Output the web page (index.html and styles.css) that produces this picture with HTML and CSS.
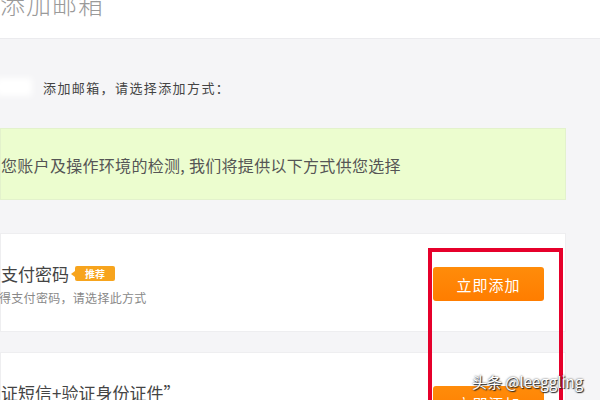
FILE: index.html
```html
<!DOCTYPE html>
<html lang="zh-CN">
<head>
<meta charset="utf-8">
<link rel="stylesheet" href="styles.css">
</head>
<body>
<header class="header">
  <h1 class="page-title">添加邮箱</h1>
</header>
<main class="main">
  <div class="intro">
    <span class="mask"></span>
    <span class="intro-text">添加邮箱，请选择添加方式：</span>
  </div>
  <div class="notice">您账户及操作环境的检测, 我们将提供以下方式供您选择</div>
  <div class="card">
    <div class="card-info">
      <div class="card-title">支付密码<span class="badge">推荐</span></div>
      <div class="card-sub">得支付密码，请选择此方式</div>
    </div>
    <button class="btn">立即添加</button>
  </div>
  <div class="card">
    <div class="card-info">
      <div class="card-title">证短信+验证身份证件”</div>
      <div class="card-sub">请选择此方式</div>
    </div>
    <button class="btn">立即添加</button>
  </div>
</main>
<div class="highlight"></div>
<div class="watermark">头条 @leeggling</div>
</body>
</html>
```
FILE: styles.css
```css
* { box-sizing: border-box; }
html, body {
  margin: 0;
  padding: 0;
  width: 600px;
  height: 400px;
  overflow: hidden;
}
body {
  background: #f5f5f7;
  font-family: "Noto Sans CJK SC", "Liberation Sans", sans-serif;
  position: relative;
}
.header {
  height: 39px;
  background: #fff;
  border-bottom: 1px solid #ebebee;
  overflow: hidden;
}
.page-title {
  margin: -11px 0 0 0;
  font-size: 25px;
  line-height: 28px;
  font-weight: 300;
  color: #9a9a9a;
  letter-spacing: 1px;
}
.main {
  display: flex;
  flex-direction: column;
}
.intro {
  margin-top: 38px;
  height: 20px;
  display: flex;
  align-items: center;
}
.mask {
  width: 36px;
  height: 18px;
  background: #fff;
  filter: blur(3px);
  margin-left: -4px;
}
.intro-text {
  margin-left: 11px;
  font-size: 13px;
  color: #444;
  letter-spacing: 1.4px;
}
.notice {
  margin-top: 31px;
  width: 566px;
  height: 72px;
  background: #ecfdcf;
  border: 1px solid #e3f2cc;
  display: flex;
  align-items: center;
  font-size: 16px;
  color: #555;
  letter-spacing: 0.3px;
  padding-top: 1px;
}
.card {
  width: 566px;
  height: 99px;
  background: #fff;
  border: 1px solid #eeeef0;
  display: flex;
  align-items: center;
  justify-content: space-between;
  padding: 3px 21px 0 0;
}
.notice + .card { margin-top: 33px; }
.card + .card { margin-top: 20px; }
.card-info {
  display: flex;
  flex-direction: column;
  gap: 5px;
}
.card-title {
  font-size: 17px;
  line-height: 22px;
  color: #444;
  display: flex;
  align-items: center;
}
.badge {
  position: relative;
  margin-left: 6px;
  background: #f7a41d;
  color: #fff;
  font-size: 10px;
  font-weight: bold;
  line-height: 15px;
  padding: 0 10px;
  border-radius: 2px;
  height: 15px;
}
.badge::before {
  content: "";
  position: absolute;
  left: -4px;
  top: 5px;
  border-right: 4px solid #f7a41d;
  border-top: 3px solid transparent;
  border-bottom: 3px solid transparent;
}
.card-sub {
  font-size: 12px;
  line-height: 16px;
  color: #888;
  margin-left: -2px;
  letter-spacing: 0.3px;
}
.btn {
  width: 111px;
  height: 34px;
  border: none;
  border-radius: 3px;
  background: linear-gradient(#ff8c0a, #ff7d00);
  color: #fff;
  font-family: "Noto Sans CJK SC", sans-serif;
  font-size: 15px;
  letter-spacing: 1px;
  padding: 0;
}
.highlight {
  position: absolute;
  left: 428px;
  top: 248px;
  width: 135px;
  height: 170px;
  border: 4px solid #e6002b;
}
.watermark {
  position: absolute;
  left: 472px;
  top: 371px;
  font-family: "Noto Sans CJK SC", "Liberation Sans", sans-serif;
  font-size: 15px;
  line-height: 22px;
  color: #fff;
  text-shadow: 0 0 2px #333, 1px 1px 1px #222;
}
```
